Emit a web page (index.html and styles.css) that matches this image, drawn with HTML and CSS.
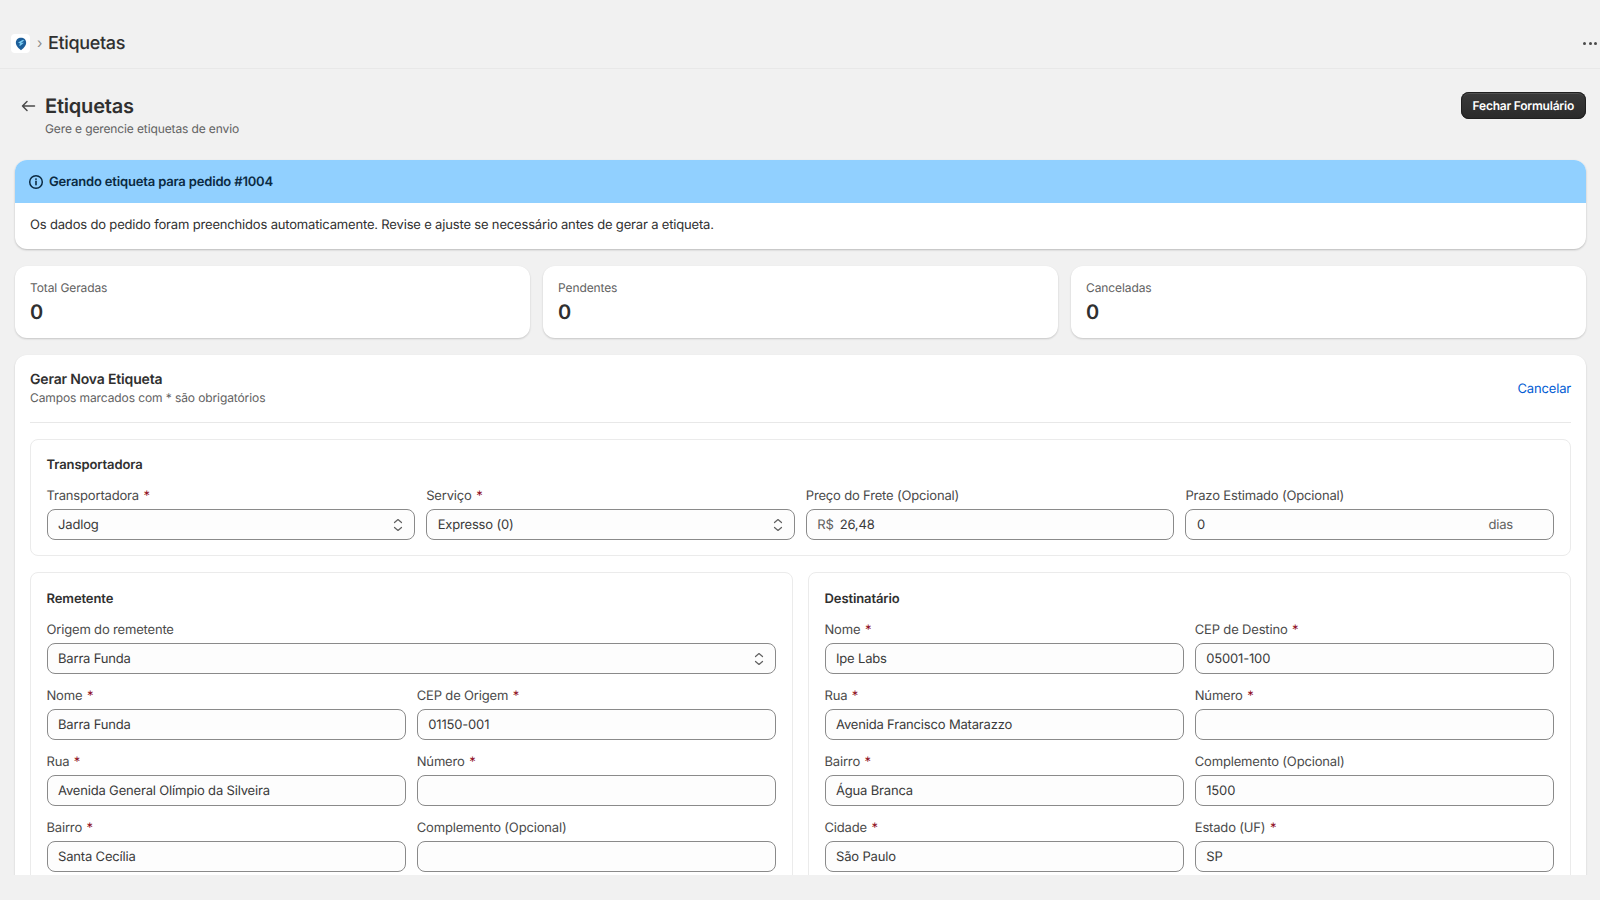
FILE: index.html
```html
<!DOCTYPE html>
<html lang="pt-BR">
<head>
<meta charset="utf-8">
<title>Etiquetas</title>
<link rel="stylesheet" href="styles.css">
</head>
<body>
<div class="app">
  <header class="topbar">
    <div class="crumbs">
      <span class="logo">
        <svg viewBox="0 0 14 16" width="12" height="14"><path d="M7 .8C3.6.8 1 3.2 1 6.4c0 3.6 3.4 6.6 6 8.8 2.6-2.2 6-5.200 6-8.800C13 3.200 10.400.8 7 .8z" fill="#1d5f9a"/><path d="M3.600 6.200 8.800 3.400 11 4 6.800 6.400 10.400 6.400 6.200 10 4.600 9.600 6.400 7.600z" fill="#7fd0f5"/></svg>
      </span>
      <span class="crumb-sep">›</span>
      <span class="crumb-title">Etiquetas</span>
    </div>
    <div class="dots"><i></i><i></i><i></i></div>
  </header>
  <main class="page">
    <div class="page-head">
      <div class="page-head-left">
        <svg class="back" viewBox="0 0 16 16" width="16" height="16"><path d="M14.500 8H2.500M7 3.500 2.500 8 7 12.500" fill="none" stroke="#4a4a4a" stroke-width="1.500" stroke-linecap="round" stroke-linejoin="round"/></svg>
        <div>
          <h1 class="page-title">Etiquetas</h1>
          <p class="page-sub">Gere e gerencie etiquetas de envio</p>
        </div>
      </div>
      <button class="btn-dark">Fechar Formulário</button>
    </div>

    <section class="banner">
      <div class="banner-head">
        <svg viewBox="0 0 16 16" width="16" height="16"><circle cx="8" cy="8" r="6.300" fill="none" stroke="#0b2a42" stroke-width="1.500"/><path d="M8 7.400v3.400" stroke="#0b2a42" stroke-width="1.600" stroke-linecap="round"/><circle cx="8" cy="5.100" r=".95" fill="#0b2a42"/></svg>
        <strong>Gerando etiqueta para pedido #1004</strong>
      </div>
      <div class="banner-body">Os dados do pedido foram preenchidos automaticamente. Revise e ajuste se necessário antes de gerar a etiqueta.</div>
    </section>

    <section class="stats">
      <div class="card stat"><span class="stat-label">Total Geradas</span><span class="stat-value">0</span></div>
      <div class="card stat"><span class="stat-label">Pendentes</span><span class="stat-value">0</span></div>
      <div class="card stat"><span class="stat-label">Canceladas</span><span class="stat-value">0</span></div>
    </section>

    <section class="card form-card">
      <div class="form-head">
        <div>
          <h2 class="form-title">Gerar Nova Etiqueta</h2>
          <p class="form-sub">Campos marcados com * são obrigatórios</p>
        </div>
        <a class="link">Cancelar</a>
      </div>

      <div class="box">
        <h3 class="box-title">Transportadora</h3>
        <div class="grid4">
          <div class="field"><label>Transportadora <b>*</b></label><div class="input select"><span>Jadlog</span><svg viewBox="0 0 12 16" width="12" height="16"><path d="M2.500 5.500 6 2.500 9.500 5.500M2.500 10.500 6 13.500 9.500 10.500" fill="none" stroke="#616161" stroke-width="1.200" stroke-linecap="round" stroke-linejoin="round"/></svg></div></div>
          <div class="field"><label>Serviço <b>*</b></label><div class="input select"><span>Expresso (0)</span><svg viewBox="0 0 12 16" width="12" height="16"><path d="M2.500 5.500 6 2.500 9.500 5.500M2.500 10.500 6 13.500 9.500 10.500" fill="none" stroke="#616161" stroke-width="1.200" stroke-linecap="round" stroke-linejoin="round"/></svg></div></div>
          <div class="field"><label>Preço do Frete (Opcional)</label><div class="input"><span class="affix prefix">R$</span><span>26,48</span></div></div>
          <div class="field"><label>Prazo Estimado (Opcional)</label><div class="input suffixed"><span>0</span><span class="affix">dias</span></div></div>
        </div>
      </div>

      <div class="two-col">
        <div class="box box-lower">
          <h3 class="box-title">Remetente</h3>
          <div class="grid2">
            <div class="field wide"><label>Origem do remetente</label><div class="input select"><span>Barra Funda</span><svg viewBox="0 0 12 16" width="12" height="16"><path d="M2.500 5.500 6 2.500 9.500 5.500M2.500 10.500 6 13.500 9.500 10.500" fill="none" stroke="#616161" stroke-width="1.200" stroke-linecap="round" stroke-linejoin="round"/></svg></div></div>
            <div class="field"><label>Nome <b>*</b></label><div class="input"><span>Barra Funda</span></div></div>
            <div class="field"><label>CEP de Origem <b>*</b></label><div class="input"><span>01150-001</span></div></div>
            <div class="field"><label>Rua <b>*</b></label><div class="input"><span>Avenida General Olímpio da Silveira</span></div></div>
            <div class="field"><label>Número <b>*</b></label><div class="input"></div></div>
            <div class="field"><label>Bairro <b>*</b></label><div class="input"><span>Santa Cecília</span></div></div>
            <div class="field"><label>Complemento (Opcional)</label><div class="input"></div></div>
          </div>
        </div>
        <div class="box box-lower">
          <h3 class="box-title">Destinatário</h3>
          <div class="grid2">
            <div class="field"><label>Nome <b>*</b></label><div class="input"><span>Ipe Labs</span></div></div>
            <div class="field"><label>CEP de Destino <b>*</b></label><div class="input"><span>05001-100</span></div></div>
            <div class="field"><label>Rua <b>*</b></label><div class="input"><span>Avenida Francisco Matarazzo</span></div></div>
            <div class="field"><label>Número <b>*</b></label><div class="input"></div></div>
            <div class="field"><label>Bairro <b>*</b></label><div class="input"><span>Água Branca</span></div></div>
            <div class="field"><label>Complemento (Opcional)</label><div class="input"><span>1500</span></div></div>
            <div class="field"><label>Cidade <b>*</b></label><div class="input"><span>São Paulo</span></div></div>
            <div class="field"><label>Estado (UF) <b>*</b></label><div class="input"><span>SP</span></div></div>
          </div>
        </div>
      </div>
    </section>
  </main>
</div>
</body>
</html>
```
FILE: styles.css
```css
* { box-sizing: border-box; }
html, body { margin: 0; height: 100%; overflow: hidden; background: #f1f1f1; }
body { font-family: Inter, "Liberation Sans", sans-serif; color: #303030; font-size: 13px; line-height: 20px; letter-spacing: -0.17px; text-rendering: geometricPrecision; }
h1, h2, h3, p { margin: 0; }

.app { height: 875px; overflow: hidden; display: flex; flex-direction: column; }

.topbar { flex: none; height: 69px; padding: 19px 3px 0 11px; display: flex; align-items: center; justify-content: space-between; border-bottom: 1px solid #e8e8e8; }
.crumbs { display: flex; align-items: center; }
.logo { width: 19px; height: 19px; background: #fff; border-radius: 4px; display: flex; align-items: center; justify-content: center; }
.crumb-sep { margin: 0 7px 0 7px; color: #8a8a8a; font-size: 14px; width: 4px; }
.crumb-title { font-size: 18px; font-weight: 500; line-height: 24px; color: #303030; letter-spacing: -0.35px; }
.dots { display: flex; gap: 2.5px; }
.dots i { width: 3px; height: 3px; border-radius: 50%; background: #4a4a4a; }

.page { flex: none; padding: 23px 14px 0 15px; }
.page-head { display: flex; justify-content: space-between; align-items: flex-start; height: 68px; }
.page-head-left { display: flex; align-items: flex-start; gap: 9px; padding-left: 5px; }
.back { margin-top: 6px; }
.page-title { font-size: 20px; line-height: 28px; font-weight: 600; letter-spacing: -0.2px; }
.page-sub { font-size: 12px; line-height: 16px; color: #616161; margin-top: 1px; letter-spacing: -0.12px; }
.btn-dark { height: 27px; padding: 0 12px; border: 0; border-radius: 8px; color: #fff; font: 600 12px/16px Inter, "Liberation Sans", sans-serif; letter-spacing: -0.22px; text-rendering: geometricPrecision; background: linear-gradient(#3a3a3a, #2a2a2a); box-shadow: inset 0 0 0 1px #1f1f1f, inset 0 2px 0 rgba(255,255,255,.12); }

.banner { height: 89px; border-radius: 12px; overflow: hidden; background: #fff; box-shadow: 0 1px 2px rgba(26,26,26,.25); }
.banner-head { height: 43px; padding: 1px 15px 0 13px; display: flex; align-items: center; gap: 5px; background: #91d0ff; color: #0b2a42; }
.banner-head svg { margin-top: -1px; }
.banner-head strong { font-weight: 600; }
.banner-body { padding: 12px 15px; }

.card { background: #fff; border-radius: 12px; box-shadow: 0 1px 2px rgba(26,26,26,.2); }
.stats { margin-top: 17px; display: grid; grid-template-columns: repeat(3, 1fr); gap: 13px; }
.stat { height: 72px; padding: 13px 15px; display: flex; flex-direction: column; }
.stat-label { font-size: 12px; line-height: 18px; color: #616161; letter-spacing: -0.1px; }
.stat-value { font-size: 20px; line-height: 28px; font-weight: 600; margin-top: 1px; }

.form-card { margin-top: 17px; height: 600px; padding: 14px 15px; }
.form-head { height: 54px; display: flex; justify-content: space-between; align-items: center; border-bottom: 1px solid #e8e8e8; padding-bottom: 15px; }
.form-title { font-size: 14px; line-height: 20px; font-weight: 600; }
.form-sub { font-size: 12px; line-height: 16px; color: #616161; letter-spacing: -0.1px; }
.link { color: #005bd3; font-size: 13px; margin-top: 1px; }

.box { border: 1px solid #ebebeb; border-radius: 8px; padding: 15px 16px 15px 15.5px; margin-top: 16px; }
.box-lower { padding-top: 16px; }
.box-title { font-size: 13px; line-height: 20px; font-weight: 600; margin-bottom: 12px; letter-spacing: -0.1px; }
.grid4 { display: grid; grid-template-columns: repeat(4, 1fr); gap: 11px; }
.two-col { display: grid; grid-template-columns: 1fr 1fr; gap: 15px; }
.grid2 { display: grid; grid-template-columns: 1fr 1fr; gap: 13px 11px; }
.wide { grid-column: 1 / -1; }
.field label { display: block; font-size: 13px; line-height: 18px; margin-bottom: 4px; color: #4a4a4a; }
.field b { color: #8e0b21; font-weight: 400; margin-left: 1px; }
.input { height: 31px; border: 1px solid #8a8a8a; border-radius: 8px; background: #fdfdfd; padding: 0 11px 0 10.5px; display: flex; align-items: center; color: #3a3a3a; }
.select, .suffixed { justify-content: space-between; }
.select svg { margin-right: -1px; }
.affix { color: #616161; }
.prefix { margin-right: 6px; }
.suffixed .affix { margin-right: 29px; }
```
